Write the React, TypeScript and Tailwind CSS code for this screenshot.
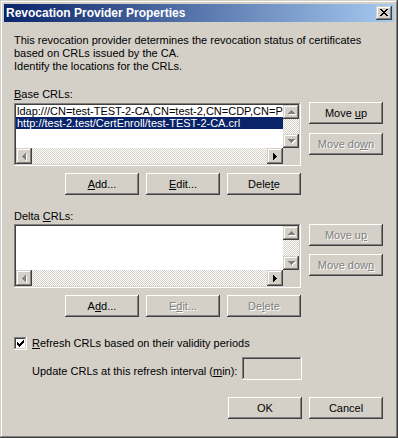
import React from "react";

const FONT = "font-['Liberation_Sans',Arial,sans-serif]";
const FRAME =
  "shadow-[inset_-1px_-1px_#404040,inset_1px_1px_#d4d0c8,inset_-2px_-2px_#808080,inset_2px_2px_#ffffff]";
const PUSH =
  "shadow-[inset_-1px_-1px_#404040,inset_1px_1px_#ffffff,inset_-2px_-2px_#808080,inset_2px_2px_#d4d0c8]";
const SCROLLBTN =
  "shadow-[inset_-1px_-1px_#404040,inset_1px_1px_#d4d0c8,inset_-2px_-2px_#808080,inset_2px_2px_#ffffff]";
const SUNKEN =
  "shadow-[inset_-1px_-1px_#ffffff,inset_1px_1px_#808080,inset_-2px_-2px_#d4d0c8,inset_2px_2px_#404040]";
const DITHER =
  "bg-[repeating-conic-gradient(#ffffff_0%_25%,#d4d0c8_0%_50%)] bg-[length:2px_2px]";
const DISABLED = "text-[#808080] [text-shadow:1px_1px_0_#ffffff]";

type Dir = "up" | "down" | "left" | "right";

function triRects(dir: Dir, dx: number, dy: number, fill: string) {
  const r: React.ReactElement[] = [];
  for (let i = 0; i < 4; i++) {
    let x = 0,
      y = 0,
      w = 1,
      h = 1;
    if (dir === "up") {
      x = 3 - i;
      y = i;
      w = 2 * i + 1;
    } else if (dir === "down") {
      x = i;
      y = i;
      w = 7 - 2 * i;
    } else if (dir === "left") {
      x = i;
      y = 3 - i;
      h = 2 * i + 1;
    } else {
      x = i;
      y = i;
      h = 7 - 2 * i;
    }
    r.push(
      <rect key={`${fill}${i}`} x={x + dx} y={y + dy} width={w} height={h} fill={fill} />
    );
  }
  return r;
}

function Arrow({ dir, disabled }: { dir: Dir; disabled?: boolean }) {
  const vertical = dir === "up" || dir === "down";
  const w = vertical ? 8 : 5;
  const h = vertical ? 5 : 8;
  return (
    <svg width={w} height={h} shapeRendering="crispEdges" className="block">
      {disabled && triRects(dir, 1, 1, "#ffffff")}
      {triRects(dir, 0, 0, disabled ? "#808080" : "#000000")}
    </svg>
  );
}

function ScrollBtn({ dir, disabled, cls }: { dir: Dir; disabled?: boolean; cls: string }) {
  return (
    <div className={`${cls} bg-[#d4d0c8] ${SCROLLBTN} flex items-center justify-center`}>
      <div className="pl-[1px] pt-[1px]">
        <Arrow dir={dir} disabled={disabled} />
      </div>
    </div>
  );
}

function ListBox({
  heightCls,
  children,
}: {
  heightCls: string;
  children?: React.ReactNode;
}) {
  return (
    <div className={`w-[287px] ${heightCls} p-[2px] bg-white ${SUNKEN}`}>
      <div className="flex flex-col h-full">
        <div className="flex flex-1 min-h-0">
          <div className="flex-1 min-w-0 overflow-hidden">{children}</div>
          <div className="w-[16px] flex flex-col">
            <ScrollBtn dir="up" disabled cls="h-[14px] w-[16px]" />
            <div className={`flex-1 ${DITHER}`} />
            <ScrollBtn dir="down" disabled cls="h-[14px] w-[16px]" />
          </div>
        </div>
        <div className="flex h-[16px]">
          <ScrollBtn dir="left" disabled cls="w-[16px] h-[16px]" />
          <div className={`flex-1 ${DITHER}`} />
          <ScrollBtn dir="right" cls="w-[16px] h-[16px]" />
          <div className="w-[16px] bg-[#d4d0c8]" />
        </div>
      </div>
    </div>
  );
}

function Btn({
  children,
  disabled,
  w = "w-[74px]",
}: {
  children: React.ReactNode;
  disabled?: boolean;
  w?: string;
}) {
  return (
    <div
      className={`${w} h-[22px] flex items-center justify-center bg-[#d4d0c8] ${PUSH} leading-[13px] whitespace-nowrap ${
        disabled ? DISABLED : "text-black"
      }`}
    >
      <span>{children}</span>
    </div>
  );
}

const CLOSE = [
  "XX....XX",
  ".XX..XX.",
  "..XXXX..",
  "...XX...",
  "..XXXX..",
  ".XX..XX.",
  "XX....XX",
];
const CHECK = [
  "......X",
  ".....XX",
  "X...XXX",
  "XX.XXX.",
  "XXXXX..",
  ".XXX...",
  "..X....",
];

function Pixels({ rows, w, h }: { rows: string[]; w: number; h: number }) {
  const rects: React.ReactElement[] = [];
  rows.forEach((row, y) =>
    row.split("").forEach((c, x) => {
      if (c === "X") rects.push(<rect key={`${x}-${y}`} x={x} y={y} width={1} height={1} fill="#000" />);
    })
  );
  return (
    <svg width={w} height={h} shapeRendering="crispEdges" className="block">
      {rects}
    </svg>
  );
}

export default function App() {
  return (
    <div className={`w-[398px] h-[438px] bg-[#d4d0c8] p-[4px] ${FRAME} ${FONT} text-[11px] text-black`}>
      {/* Title bar */}
      <div className="h-[18px] flex items-center bg-[linear-gradient(to_right,#0a246a,#a6caf0)] pl-[2px] pr-[2px]">
        <span className="flex-1 text-white font-bold text-[12px] leading-[18px] whitespace-nowrap">
          Revocation Provider Properties
        </span>
        <div className={`w-[16px] h-[14px] bg-[#d4d0c8] ${SCROLLBTN} flex items-start justify-start pl-[4px] pt-[3px]`}>
          <Pixels rows={CLOSE} w={8} h={7} />
        </div>
      </div>

      <div className="pl-[10px] pr-[11px]">
        <p className="mt-[12px] leading-[13px] whitespace-nowrap">
          This revocation provider determines the revocation status of certificates
          <br />
          based on CRLs issued by the CA.
          <br />
          Identify the locations for the CRLs.
        </p>

        {/* Base CRLs */}
        <div className="mt-[15px] leading-[13px]">
          <u>B</u>ase CRLs:
        </div>
        <div className="flex items-start gap-[8px] mt-[2px]">
          <ListBox heightCls="h-[63px]">
            <div className="h-[12px] leading-[12px] pl-[1px] whitespace-nowrap overflow-hidden">
              ldap:///CN=test-TEST-2-CA,CN=test-2,CN=CDP,CN=P
            </div>
            <div className="h-[12px] leading-[12px] pl-[1px] whitespace-nowrap bg-[#0a246a] text-white">
              http://test-2.test/CertEnroll/test-TEST-2-CA.crl
            </div>
          </ListBox>
          <div className="flex flex-col gap-[9px] -mt-[1px]">
            <Btn>
              Move <u>u</u>p
            </Btn>
            <Btn disabled>
              Move do<u>w</u>n
            </Btn>
          </div>
        </div>
        <div className="flex gap-[7px] mt-[7px] pl-[51px]">
          <Btn>
            <u>A</u>dd...
          </Btn>
          <Btn>
            <u>E</u>dit...
          </Btn>
          <Btn>
            Dele<u>t</u>e
          </Btn>
        </div>

        {/* Delta CRLs */}
        <div className="mt-[15px] leading-[13px]">
          Delta <u>C</u>RLs:
        </div>
        <div className="flex items-start gap-[8px] mt-[1px]">
          <ListBox heightCls="h-[64px]" />
          <div className="flex flex-col gap-[8px]">
            <Btn disabled>
              Move u<u>p</u>
            </Btn>
            <Btn disabled>
              Move dow<u>n</u>
            </Btn>
          </div>
        </div>
        <div className="flex gap-[7px] mt-[7px] pl-[51px]">
          <Btn>
            A<u>d</u>d...
          </Btn>
          <Btn disabled>
            E<u>d</u>it...
          </Btn>
          <Btn disabled>
            De<u>l</u>ete
          </Btn>
        </div>

        {/* Refresh checkbox */}
        <div className="flex items-center gap-[5px] mt-[20px] h-[13px]">
          <div className={`w-[13px] h-[13px] bg-white ${SUNKEN} pl-[3px] pt-[3px]`}>
            <Pixels rows={CHECK} w={7} h={7} />
          </div>
          <span className="leading-[13px] whitespace-nowrap">
            <u>R</u>efresh CRLs based on their validity periods
          </span>
        </div>

        <div className="flex items-start mt-[7px] pl-[18px] h-[23px]">
          <span className="w-[210px] mt-[8px] leading-[13px] whitespace-nowrap">
            Update CRLs at this refresh interval (<u>m</u>in):
          </span>
          <div className={`w-[60px] h-[23px] bg-[#d4d0c8] ${SUNKEN}`} />
        </div>

        <div className="flex justify-end gap-[7px] mt-[17px]">
          <Btn>OK</Btn>
          <Btn>Cancel</Btn>
        </div>
      </div>
    </div>
  );
}
